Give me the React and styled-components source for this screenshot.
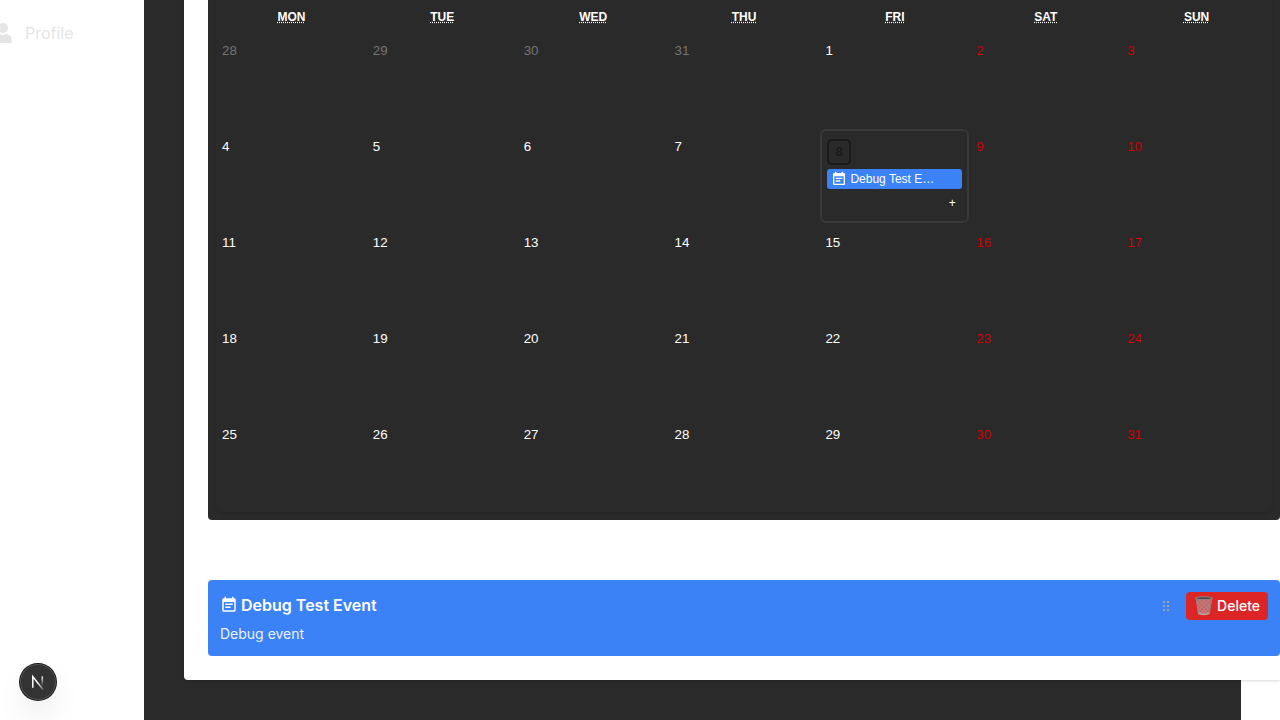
import React from "react";
import styled, { createGlobalStyle, css } from "styled-components";
import { FaUser } from "react-icons/fa";
import { MdEventNote } from "react-icons/md";

const GlobalStyle = createGlobalStyle`
  *, *::before, *::after { box-sizing: border-box; }
  body { margin: 0; background: #fff; font-family: Inter, sans-serif; }
  button { border: 0; margin: 0; padding: 0; background: none; cursor: pointer; }
`;

const Shell = styled.div`
  display: flex;
  min-height: 100vh;
  overflow: hidden;
`;

const Sidebar = styled.nav`
  flex: 0 0 144px;
  overflow: hidden;
  padding-top: 21px;
`;

const SidebarLink = styled.a`
  display: flex;
  align-items: center;
  gap: 12px;
  margin-left: -7px;
  color: #e5e5e5;
  font-size: 16px;
  line-height: 24px;
  text-decoration: none;
`;

const Main = styled.main`
  flex: 1;
  min-width: 0;
  margin-right: 39px;
  padding: 0 0 40px 40px;
  background: #2a2a2a;
`;

const Panel = styled.section`
  margin-right: -39px;
  padding: 0 0 24px 24px;
  background: #fff;
  border-radius: 0 0 0 4px;
  box-shadow: 0 1px 3px rgba(0, 0, 0, 0.15);
`;

const CalendarCard = styled.div`
  padding: 0 8px 8px;
  background: #2a2a2a;
  border-radius: 0 0 4px 4px;
  font-family: "Liberation Sans", Arial, sans-serif;
`;

const CalendarBody = styled.div`
  border-radius: 0 0 8px 8px;
  box-shadow: 0 1px 3px rgba(0, 0, 0, 0.15);
`;

const Week = styled.div`
  display: grid;
  grid-template-columns: repeat(7, minmax(0, 1fr));
`;

const Weekday = styled.div`
  height: 32px;
  padding-top: 10px;
  color: #fff;
  font-size: 12px;
  font-weight: 700;
  line-height: 14px;
  text-align: center;
  text-transform: uppercase;
`;

const dayColors = { outside: "#757575", weekend: "#d10000", normal: "#fff" };

const Tile = styled.div`
  display: flex;
  flex-direction: column;
  align-items: flex-start;
  height: 96px;
  padding: 11px 6px;
  ${(p) =>
    p.$selected &&
    css`
      height: 94px;
      margin: 1px;
      padding: 8px 5px;
      border: 2px solid #393939;
      border-radius: 6px;
    `}
`;

const DayButton = styled.button`
  color: ${(p) => dayColors[p.$kind]};
  font-family: inherit;
  line-height: 16px;
  ${(p) =>
    p.$selected &&
    css`
      padding: 3px 6px;
      border: 2px solid #1a1a1a;
      border-radius: 5px;
      color: #1a1a1a;
      font-weight: 700;
    `}
`;

const EventChip = styled.button`
  display: flex;
  align-items: center;
  gap: 3px;
  width: 100%;
  height: 20px;
  margin-top: 4px;
  padding: 0 4px;
  border-radius: 3px;
  background: #3b82f6;
  color: #fff;
  font-family: inherit;
  font-size: 12px;
  line-height: 16px;
`;

const AddButton = styled.button`
  align-self: flex-end;
  width: 20px;
  height: 20px;
  margin-top: 4px;
  color: #fff;
  font-family: inherit;
  font-size: 12px;
  line-height: 20px;
`;

const EventCard = styled.article`
  margin-top: 60px;
  padding: 12px;
  background: #3b82f6;
  border-radius: 4px;
  color: #fff;
`;

const EventHeader = styled.header`
  display: flex;
  align-items: flex-start;
  justify-content: space-between;
`;

const EventTitle = styled.h3`
  display: flex;
  align-items: center;
  gap: 3px;
  margin: 0;
  font-size: 16px;
  font-weight: 600;
  line-height: 26px;
`;

const Actions = styled.div`
  display: flex;
  align-items: center;
  gap: 16px;
`;

const DragHandle = styled.button`
  display: flex;
  color: #9ca3af;
`;

const DeleteButton = styled.button`
  display: flex;
  align-items: center;
  gap: 3px;
  padding: 4px 8px;
  border-radius: 4px;
  background: #dc2626;
  color: #fff;
  font-family: inherit;
  font-size: 14px;
  font-weight: 500;
  line-height: 20px;
`;

const EventText = styled.p`
  margin: 4px 0 0;
  font-size: 14px;
  line-height: 20px;
  opacity: 0.9;
`;

const DevToolsButton = styled.button`
  position: fixed;
  left: 20px;
  bottom: 20px;
  width: 36px;
  height: 36px;
  border-radius: 50%;
  background: #333;
  box-shadow: 0 0 0 1px #171717, inset 0 0 0 1px #505050,
    0 16px 32px -8px rgba(0, 0, 0, 0.24);
`;

const weekdays = [
  ["Mon", "Monday"],
  ["Tue", "Tuesday"],
  ["Wed", "Wednesday"],
  ["Thu", "Thursday"],
  ["Fri", "Friday"],
  ["Sat", "Saturday"],
  ["Sun", "Sunday"],
];

const weeks = [
  [28, 29, 30, 31, 1, 2, 3],
  [4, 5, 6, 7, 8, 9, 10],
  [11, 12, 13, 14, 15, 16, 17],
  [18, 19, 20, 21, 22, 23, 24],
  [25, 26, 27, 28, 29, 30, 31],
];

function dayKind(week, column) {
  if (week === 0 && column < 4) return "outside";
  return column > 4 ? "weekend" : "normal";
}

function GripIcon() {
  return (
    <svg width="8" height="12" viewBox="0 0 8 12" fill="currentColor" aria-hidden="true">
      <path d="M1 1h2v2H1zM5 1h2v2H5zM1 5h2v2H1zM5 5h2v2H5zM1 9h2v2H1zM5 9h2v2H5z" />
    </svg>
  );
}

function BinIcon() {
  return (
    <svg width="20" height="20" viewBox="0 0 20 20" fill="none" aria-hidden="true">
      <path d="M2 2.5 4.2 18Q10 20 15.4 18L17.8 2.5Z" fill="#a8a0a0" fillOpacity="0.5" />
      <path
        d="M3 6 14 18M3 10 11 18.5M4 14 8 18.5M5 3.5 16 15M9 3.5 16.5 11M13 3.5 17 7M17 6 6 18M16.5 10 9 18.5M16 14 12 18.5M15 3.5 4 15M11 3.5 3.5 11M7 3.5 3 7"
        stroke="#c9b9b9"
        strokeOpacity="0.55"
        strokeWidth="0.6"
      />
      <path d="M2.2 3 4.4 17.5M17.6 3 15.4 17.5" stroke="#8b8587" strokeWidth="1" />
      <path d="M4.2 17.4Q10 19.6 15.4 17.4" stroke="#b3aaaa" strokeWidth="1.4" />
      <ellipse cx="10" cy="2.2" rx="8.6" ry="1.4" fill="#4d4849" stroke="#969092" strokeWidth="0.8" />
    </svg>
  );
}

function NextLogo() {
  return (
    <svg width="36" height="36" viewBox="0 0 36 36" fill="none" aria-hidden="true">
      <defs>
        <linearGradient id="diagonal" gradientUnits="userSpaceOnUse" x1="18" y1="19" x2="23" y2="26">
          <stop stopColor="#fff" />
          <stop offset="1" stopColor="#fff" stopOpacity="0.2" />
        </linearGradient>
        <linearGradient id="stem" gradientUnits="userSpaceOnUse" x1="22" y1="12" x2="22" y2="22">
          <stop stopColor="#fff" />
          <stop offset="1" stopColor="#fff" stopOpacity="0" />
        </linearGradient>
      </defs>
      <path d="M23 25.5 12.8 12.6V23.8" stroke="url(#diagonal)" strokeWidth="1.5" />
      <path d="M22.3 12.4V22" stroke="url(#stem)" strokeWidth="1.5" />
    </svg>
  );
}

export default function App() {
  return (
    <>
      <GlobalStyle />
      <Shell>
        <Sidebar>
          <SidebarLink href="#profile">
            <FaUser size={20} />
            Profile
          </SidebarLink>
        </Sidebar>
        <Main>
          <Panel>
            <CalendarCard>
              <CalendarBody>
                <Week>
                  {weekdays.map(([short, full]) => (
                    <Weekday key={short}>
                      <abbr title={full}>{short}</abbr>
                    </Weekday>
                  ))}
                </Week>
                {weeks.map((days, w) => (
                  <Week key={w}>
                    {days.map((day, c) => {
                      const selected = day === 8;
                      return (
                        <Tile key={c} $selected={selected}>
                          <DayButton $kind={dayKind(w, c)} $selected={selected}>
                            {day}
                          </DayButton>
                          {selected && (
                            <>
                              <EventChip>
                                <MdEventNote size={16} />
                                Debug Test E…
                              </EventChip>
                              <AddButton aria-label="Add event">+</AddButton>
                            </>
                          )}
                        </Tile>
                      );
                    })}
                  </Week>
                ))}
              </CalendarBody>
            </CalendarCard>
            <EventCard>
              <EventHeader>
                <EventTitle>
                  <MdEventNote size={18} />
                  Debug Test Event
                </EventTitle>
                <Actions>
                  <DragHandle aria-label="Drag event">
                    <GripIcon />
                  </DragHandle>
                  <DeleteButton>
                    <BinIcon />
                    Delete
                  </DeleteButton>
                </Actions>
              </EventHeader>
              <EventText>Debug event</EventText>
            </EventCard>
          </Panel>
        </Main>
      </Shell>
      <DevToolsButton aria-label="Open Next.js Dev Tools">
        <NextLogo />
      </DevToolsButton>
    </>
  );
}
